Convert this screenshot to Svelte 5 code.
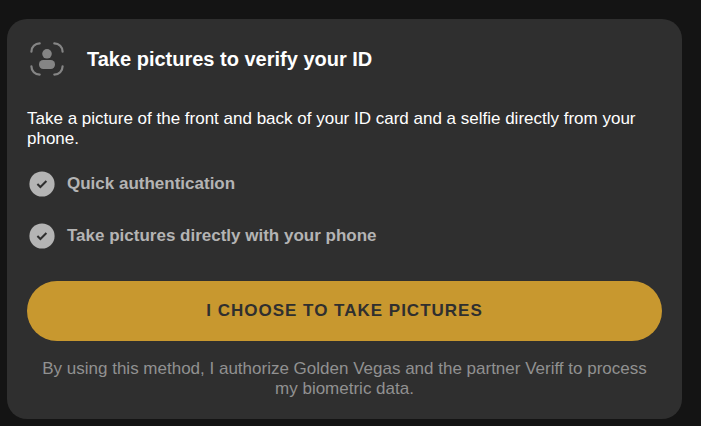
<script>
  const benefits = ['Quick authentication', 'Take pictures directly with your phone'];
</script>

<main>
  <section class="card" aria-labelledby="title">
    <header>
      <svg class="scan" viewBox="0 0 40 40" aria-hidden="true">
        <g fill="none" stroke="#858585" stroke-width="2.200" stroke-linecap="round">
          <path d="M4.400 12.700C4.400 8 8 4.400 12.700 4.400" />
          <path d="M27.300 4.400C32 4.400 35.600 8 35.600 12.700" />
          <path d="M35.600 27.300C35.600 32 32 35.600 27.300 35.600" />
          <path d="M12.700 35.600C8 35.600 4.400 32 4.400 27.300" />
        </g>
        <circle cx="20" cy="14.800" r="4.800" fill="#858585" />
        <rect x="12" y="21" width="16" height="9" rx="4.200" fill="#858585" />
      </svg>
      <h1 id="title">Take pictures to verify your ID</h1>
    </header>
    <p class="intro">
      Take a picture of the front and back of your ID card and a selfie directly from your phone.
    </p>
    <ul>
      {#each benefits as benefit}
        <li>
          <svg class="tick" viewBox="0 0 26 26" aria-hidden="true">
            <circle cx="13" cy="13" r="12.600" fill="#b4b4b4" />
            <path d="M8.400 13l3 3 6-6" fill="none" stroke="#2f2f2f" stroke-width="2" />
          </svg>
          <span>{benefit}</span>
        </li>
      {/each}
    </ul>
    <button type="button">I choose to take pictures</button>
    <p class="legal">
      By using this method, I authorize Golden Vegas and the partner Veriff to process my biometric data.
    </p>
  </section>
</main>

<style>
  :global(body) {
    background: #141414;
  }

  main {
    padding: 19px 19px 7px 7px;
    font-family: 'Liberation Sans', Arial, sans-serif;
    font-size: 17px;
    line-height: 20px;
  }

  .card {
    padding: 20px;
    border-radius: 20px;
    background: #2f2f2f;
  }

  header {
    display: flex;
    align-items: center;
    gap: 20px;
  }

  .scan {
    width: 40px;
    height: 40px;
    flex: none;
  }

  h1 {
    margin: 0;
    color: #fff;
    font-size: 20px;
    line-height: 24px;
  }

  .intro {
    margin: 30px 0 22px;
    color: #fff;
  }

  ul {
    display: grid;
    gap: 26px;
    margin: 0;
    padding: 0 2px;
    list-style: none;
  }

  li {
    display: flex;
    align-items: center;
    gap: 12px;
    color: #b4b4b4;
    font-weight: 700;
  }

  .tick {
    width: 26px;
    height: 26px;
    flex: none;
  }

  button {
    display: block;
    width: 100%;
    height: 60px;
    margin: 32px 0 18px;
    padding: 0 20px;
    border: 0;
    border-radius: 30px;
    background: #c8982f;
    color: #2f2f2f;
    font: inherit;
    font-weight: 700;
    letter-spacing: 1px;
    text-transform: uppercase;
    cursor: pointer;
  }

  .legal {
    margin: 0;
    padding: 0 5px;
    color: #919191;
    text-align: center;
  }
</style>
